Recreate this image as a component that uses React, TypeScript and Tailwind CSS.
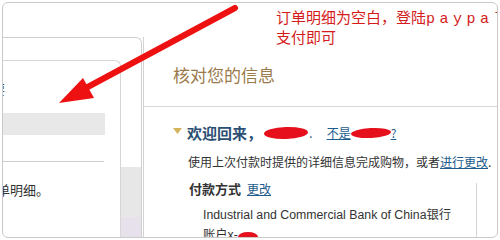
const Blob = ({ className }: { className: string }) => (
  <span className={`inline-block bg-[#e5101c] rounded-[50%] ${className}`} />
);

export default function App() {
  return (
    <div className="relative w-[500px] h-[240px] bg-white p-[2px] overflow-hidden font-['Noto_Sans_CJK_SC',sans-serif] text-[#333]">
      <div className="relative h-[236px] border border-[#c9c9c9] rounded-[6px] overflow-hidden flex flex-col">
        {/* top strip */}
        <div className="h-[34px] shrink-0" />

        <div className="flex flex-1 min-h-0">
          {/* left column */}
          <div className="w-[139px] shrink-0 border-t border-r border-[#cfcfcf] rounded-tr-[6px] flex">
            <div className="mt-[22px] w-[118px] shrink-0 border-t border-r border-[#d6d6d6] rounded-tr-[6px] flex flex-col overflow-hidden">
              <div className="mt-[14px] h-[27px] flex items-center">
                <span className="text-[13px] leading-none -ml-[11px]">要</span>
              </div>
              <div className="mt-[11px] h-[22px] w-[102px] bg-[#e8e8e8]" />
              <div className="mt-[26px] w-[101px] border-t border-[#cccccc]" />
              <div className="mt-[18px] text-[13px] leading-[20px] -ml-[6px]">单明细。</div>
            </div>
            <div className="flex-1 flex flex-col">
              <div className="flex-1" />
              <div className="h-[50px] bg-[#e7e7e7]" />
              <div className="h-[20px] bg-[#e6e1ea]" />
            </div>
          </div>

          {/* right column */}
          <div className="flex-1 ml-[1px] border-l border-[#d2d2d2] flex flex-col">
            <div className="h-[70px] shrink-0 border-b border-[#d6d6d6] pl-[29px] pt-[26px]">
              <div className="text-[17px] leading-[24px] text-[#9a7a4b]">核对您的信息</div>
            </div>
            <div className="pl-[29px] flex-1 flex flex-col">
              <div className="mt-[16px] h-[20px] flex items-center">
                <svg width="9" height="6" viewBox="0 0 9 6" className="mr-[5px] -mt-[4px]">
                  <polygon points="0,0 9,0 4.5,6" fill="#d4b45a" />
                </svg>
                <span className="text-[15px] font-bold text-[#2b4f74] leading-[20px]">欢迎回来，</span>
                <Blob className="w-[44px] h-[12px] -rotate-2 ml-[2px]" />
                <span className="text-[13px] text-[#2b4f74] ml-[1px]">.</span>
                <span className="ml-[14px] text-[12px] text-[#1d5c8c] underline flex items-center">
                  不是
                  <Blob className="w-[40px] h-[10px] -rotate-3" />
                  ?
                </span>
              </div>
              <div className="mt-[9px] pl-[15px] h-[20px] text-[12px] leading-[20px] whitespace-nowrap">
                使用上次付款时提供的详细信息完成购物，或者<span className="text-[#1d5c8c] underline">进行更改</span>.
              </div>
              <div className="flex flex-1 mt-[7px]">
                <div className="flex-1 pl-[16px]">
                  <div className="h-[20px] text-[13px] leading-[20px]">
                    <span className="font-bold">付款方式</span>
                    <span className="ml-[6px] text-[12px] text-[#1d5c8c] underline">更改</span>
                  </div>
                  <div className="mt-[6px] pl-[14px] text-[12.3px] leading-[20px] font-['Liberation_Sans','Noto_Sans_CJK_SC',sans-serif] whitespace-nowrap">
                    Industrial and Commercial Bank of China银行
                  </div>
                  <div className="pl-[14px] text-[12.3px] leading-[20px] flex items-center font-['Liberation_Sans','Noto_Sans_CJK_SC',sans-serif]">
                    账户x-
                    <Blob className="w-[20px] h-[10px] mt-[4px]" />
                  </div>
                </div>
                <div className="w-[21px] shrink-0 mt-[4px] border-l border-[#d6d6d6]" />
              </div>
            </div>
          </div>
        </div>

        {/* annotation */}
        <div className="absolute left-[273px] top-[5px] text-[15px] leading-[17px] text-[#d41c1c] whitespace-nowrap font-['Noto_Sans_CJK_SC',serif]">
          <div>
            订单明细为空白，登陆
            <span className="font-['Liberation_Mono',monospace] text-[15px] tracking-[4.5px]">paypal</span>
          </div>
          <div>支付即可</div>
        </div>
      </div>

      {/* red arrow */}
      <svg className="absolute left-0 top-0 pointer-events-none" width="500" height="240" viewBox="0 0 500 240">
        <line x1="235" y1="8" x2="84" y2="89" stroke="#ee1111" strokeWidth="6" strokeLinecap="round" />
        <polygon points="59,103 83,78 94,98" fill="#ee1111" />
      </svg>
    </div>
  );
}
